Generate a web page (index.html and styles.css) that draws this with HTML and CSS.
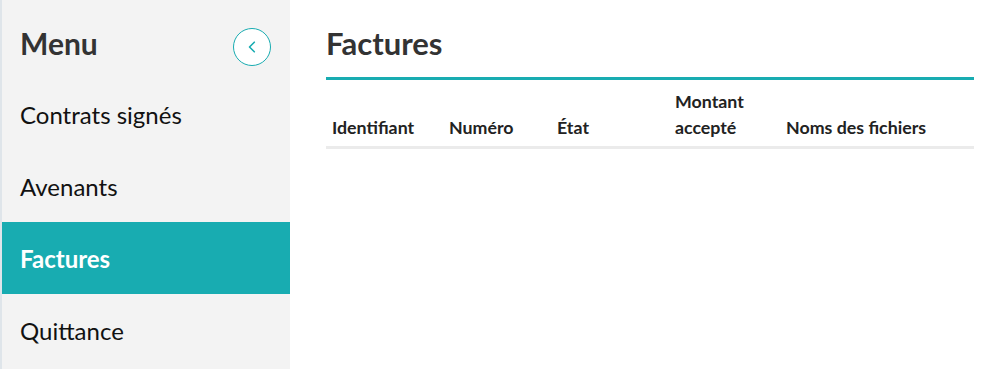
FILE: index.html
```html
<!DOCTYPE html>
<html lang="fr">

<head>
    <meta charset="UTF-8">
    <meta name="viewport" content="width=device-width, initial-scale=1.0">
    <title>Factures</title>
    <link rel="stylesheet" href="styles.css">
</head>

<body>
    <div class="sidebar">
        <div class="sidebar-header">
            <span class="sidebar-title">Menu</span>
            <button class="collapse-btn" aria-label="Réduire le menu">
                <svg width="14" height="14" viewBox="0 0 14 14">
                    <path d="M9.3 2.2 L4.5 7 L9.3 11.8" fill="none" stroke="#18acb1" stroke-width="1.6" stroke-linecap="round" stroke-linejoin="round" />
                </svg>
            </button>
        </div>
        <a class="menu-item" href="#contrats">Contrats signés</a>
        <a class="menu-item" href="#avenants">Avenants</a>
        <a class="menu-item active" href="#factures">Factures</a>
        <a class="menu-item" href="#quittance">Quittance</a>
    </div>

    <div class="content">
        <h2>Factures</h2>

        <table class="invoices">
            <thead>
                <tr>
                    <th class="col-id">Identifiant</th>
                    <th class="col-num">Numéro</th>
                    <th class="col-state">État</th>
                    <th class="col-amount">Montant<br>accepté</th>
                    <th>Noms des fichiers</th>
                </tr>
            </thead>
            <tbody></tbody>
        </table>
    </div>
</body>

</html>
```

FILE: styles.css
```css
body {
    font-family: Lato, "Open Sans", sans-serif;
    background-color: #fff;
    margin: 0;
    display: flex;
    height: 100vh;
    color: #222;
}

.sidebar {
    width: 288px;
    flex-shrink: 0;
    background-color: #f3f3f3;
    border-left: 2px solid #dfe5ea;
    display: flex;
    flex-direction: column;
}

.sidebar-header {
    height: 78px;
    padding: 0 19px 0 18px;
    display: flex;
    align-items: center;
    justify-content: space-between;
}

.sidebar-title {
    font-size: 30px;
    font-weight: bold;
    color: #333;
    margin-top: 8px;
}

.collapse-btn {
    width: 38px;
    height: 38px;
    border-radius: 50%;
    border: 1px solid #18acb1;
    background-color: #fff;
    display: flex;
    align-items: center;
    justify-content: center;
    padding: 0;
    margin-top: 16px;
    cursor: pointer;
}

.menu-item {
    height: 72px;
    padding-left: 18px;
    display: flex;
    align-items: center;
    font-size: 24px;
    color: #111;
    text-decoration: none;
}

.menu-item.active {
    background-color: #18acb1;
    color: #fff;
    font-weight: bold;
}

.content {
    flex: 1;
    padding: 0 16px 0 36px;
}

h2 {
    font-size: 31px;
    font-weight: bold;
    color: #333;
    margin: 0;
    padding: 25px 0 15px;
    line-height: 1.2;
    border-bottom: 3px solid #18acb1;
}

.invoices {
    width: 100%;
    border-collapse: collapse;
}

.invoices th {
    font-size: 17.8px;
    font-weight: bold;
    line-height: 26px;
    text-align: left;
    vertical-align: bottom;
    padding: 8px 6px 6px 6px;
    border-bottom: 3px solid #ebebeb;
    color: #222;
}

.col-id {
    width: 105px;
}

.col-num {
    width: 96px;
}

.col-state {
    width: 106px;
}

.col-amount {
    width: 99px;
}
```
